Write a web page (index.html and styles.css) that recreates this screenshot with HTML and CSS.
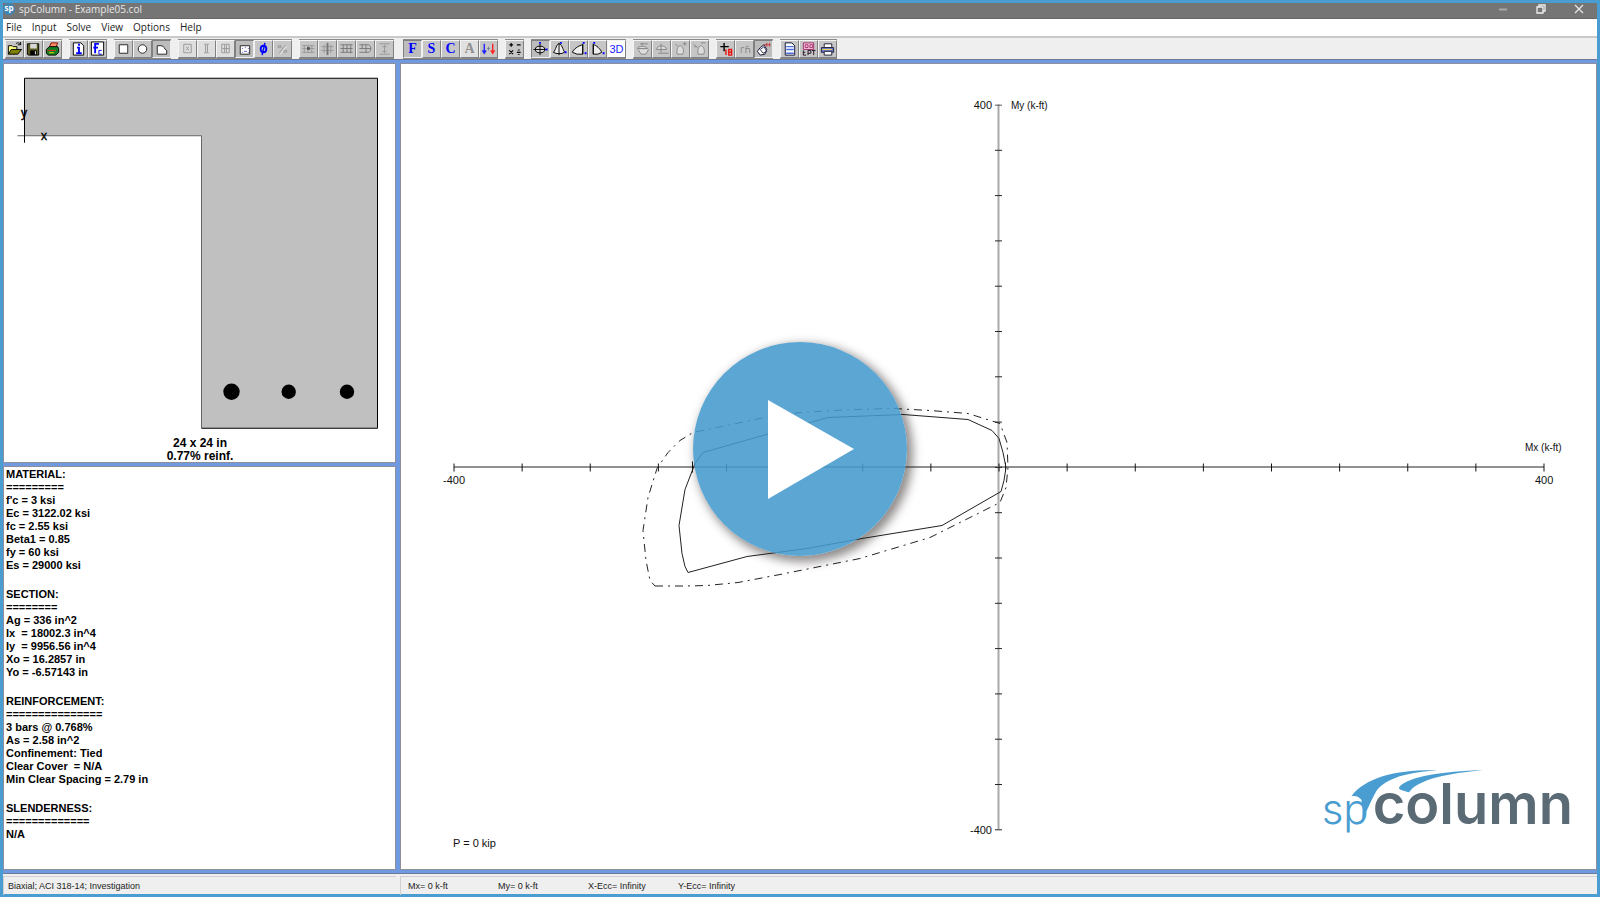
FILE: index.html
```html
<!DOCTYPE html>
<html lang="en">
<head>
<meta charset="utf-8">
<title>spColumn - Example05.col</title>
<link rel="stylesheet" href="styles.css">
</head>
<body>
<div class="window">
  <header class="titlebar">
    <svg class="app-icon" viewBox="0 0 12 12" aria-hidden="true"><circle cx="6" cy="6" r="6" fill="#3f86b5"/><text x="6" y="8" class="app-icon-text">sp</text></svg>
    <h1 class="title">spColumn - Example05.col</h1>
    <div class="window-controls">
      <button class="wc" aria-label="Minimize"><svg viewBox="0 0 10 10"><path d="M1 5.500h8" stroke="#a9a9a9" stroke-width="2"/></svg></button>
      <button class="wc" aria-label="Restore"><svg viewBox="0 0 10 10"><path d="M1 3h6v6H1zM3 3V1h6v6H7" fill="none" stroke="#f0f0f0" stroke-width="1.300"/></svg></button>
      <button class="wc" aria-label="Close"><svg viewBox="0 0 10 10"><path d="M1 1l8 8M9 1l-8 8" stroke="#e6e6e6" stroke-width="1.300"/></svg></button>
    </div>
  </header>
  <nav class="menubar" aria-label="Main menu">
    <button>File</button><button>Input</button><button>Solve</button><button>View</button><button>Options</button><button>Help</button>
  </nav>
  <div class="toolbar" role="toolbar" aria-label="Tools">
    <div class="group">
      <button aria-label="Open"><svg viewBox="0 0 17 17"><path d="M2 14V5h4l1 1h4v3" fill="#ffff80" stroke="#000"/><path d="M2 14l3-5h11l-4 5z" fill="#808000" stroke="#000"/><path d="M10 3c2-2 4-1 5 1M15 1v3h-3" fill="none" stroke="#000"/></svg></button>
      <button aria-label="Save"><svg viewBox="0 0 17 17"><path d="M2 3h12v12H3l-1-1z" fill="#5a5a20" stroke="#000"/><path d="M5 3h7v5H5z" fill="#d8d8d8"/><path d="M5 10h7v5H5z" fill="#000"/><path d="M10 11h1v3h-1z" fill="#fff"/></svg></button>
      <button aria-label="Print"><svg viewBox="0 0 17 17"><path d="M5 7l2-5h7l-2 5" fill="#ff8a6a" stroke="#801000"/><path d="M2 9l3-3h9l1 2v4l-3 3H4l-2-2z" fill="#128022" stroke="#000"/><path d="M3 10h9" stroke="#e22"/><path d="M5 12.500h5" stroke="#ffe000"/></svg></button>
    </div>
    <div class="group">
      <button aria-label="General information"><svg viewBox="0 0 17 17"><path d="M3 2h8l3 3v10H3z" fill="#fff" stroke="#000"/><path d="M7 7h2v6M6 13h6" fill="none" stroke="#00f" stroke-width="2"/><path d="M8 3h2v2H8z" fill="#00f"/></svg></button>
      <button aria-label="Material properties"><svg viewBox="0 0 17 17"><path d="M2 1h13v14H2z" fill="#fff" stroke="#000"/><path d="M10 3H6v10M4 7h5" fill="none" stroke="#00f" stroke-width="2"/><path d="M13 10h-3v4h3" fill="none" stroke="#00f"/></svg></button>
    </div>
    <div class="group">
      <button aria-label="Rectangular section"><svg viewBox="0 0 17 17"><path d="M4 4h9v9H4z" fill="#fff" stroke="#222"/></svg></button>
      <button aria-label="Circular section"><svg viewBox="0 0 17 17"><circle cx="8.500" cy="8.500" r="4.500" fill="#fff" stroke="#222"/></svg></button>
      <button class="pressed" aria-label="Irregular section"><svg viewBox="0 0 17 17"><path d="M4 5h4c4 0 3 4 6 5v4H4z" fill="#fff" stroke="#222"/></svg></button>
    </div>
    <div class="group">
      <button class="faint" disabled aria-label="All sides equal"><svg viewBox="0 0 17 17"><path d="M4.500 3.500h8v9h-8zM7 6l3 4M10 6l-3 4" fill="none" stroke="#999"/></svg></button>
      <button class="faint" disabled aria-label="Equal spacing"><svg viewBox="0 0 17 17"><path d="M6 3.500h5M6 12.500h5M7.500 4v8M9.500 4v8" fill="none" stroke="#999"/></svg></button>
      <button class="faint" disabled aria-label="Sides different"><svg viewBox="0 0 17 17"><path d="M4.500 3.500h8v9h-8zM7.500 4v8M9.500 4v8M5 8h8" fill="none" stroke="#999"/></svg></button>
      <button class="pressed" aria-label="Irregular pattern"><svg viewBox="0 0 17 17"><path d="M4 5h10v9H4z" fill="#fff" stroke="#222"/><path d="M6 8h1M9 7h1M12 8h1M6 12h1M8 11h3M12 12h1" stroke="#55c"/></svg></button>
      <button aria-label="Reduction factors"><svg viewBox="0 0 17 17"><ellipse cx="8.500" cy="8.500" rx="3" ry="3.500" fill="none" stroke="#00f" stroke-width="2"/><path d="M10 2L7 15" stroke="#00f" stroke-width="1.500"/></svg></button>
      <button disabled aria-label="Reinforcement ratio"><svg viewBox="0 0 17 17"><path d="M12 4l-7 9M4 5h3v2H4zM10 10h3v2h-3z" fill="none" stroke="#999"/><path d="M13 5l-7 9" stroke="#eee"/></svg></button>
    </div>
    <div class="group">
      <button disabled aria-label="Column above"><svg viewBox="0 0 17 17"><path d="M2 5h13M2 8h13M2 12h13M4 4v9M8 4v9M12 4v9" stroke="#999"/><path d="M7 8h3" stroke="#555" stroke-width="3"/></svg></button>
      <button disabled aria-label="Column"><svg viewBox="0 0 17 17"><path d="M2 6h13M2 10h13M5 4v9M12 4v9" stroke="#999"/><path d="M8.500 2v13" stroke="#777" stroke-width="2"/></svg></button>
      <button disabled aria-label="X beams"><svg viewBox="0 0 17 17"><path d="M2 4h13M2 8h13M2 12h13M5 4v8M9 4v8M13 4v9" stroke="#777"/></svg></button>
      <button disabled aria-label="Y beams"><svg viewBox="0 0 17 17"><path d="M2 4h10l2 2v4l-2 2H2M2 8h12M5 4v4M9 4v8" fill="none" stroke="#777"/></svg></button>
      <button disabled aria-label="Slenderness factors"><svg viewBox="0 0 17 17"><path d="M3 3h11M3 14h11M8.500 4v9M6 6h5M6 11h5" stroke="#999"/></svg></button>
    </div>
    <div class="group loads">
      <button class="letter pressed" aria-label="Factored loads">F</button>
      <button class="letter" aria-label="Service loads">S</button>
      <button class="letter" aria-label="Control points">C</button>
      <button class="letter" disabled aria-label="Axial loads">A</button>
      <button aria-label="Load combinations"><svg viewBox="0 0 17 17"><path d="M4 3v9M2 10l2 3 2-3" fill="none" stroke="#22f" stroke-width="1.500"/><path d="M7 8h3M8.500 6v4" stroke="#779"/><path d="M13 3v9M11 10l2 3 2-3" fill="none" stroke="#f22" stroke-width="1.500"/></svg></button>
    </div>
    <div class="group">
      <button aria-label="Execute"><svg viewBox="0 0 17 17"><path d="M3 4h4M5 2v4M11 4h4M3 10l4 4M7 10l-4 4M11 12h4" stroke="#000" stroke-width="1.300"/><path d="M12 9h2v1h-2zM12 14h2v1h-2z"/></svg></button>
    </div>
    <div class="group">
      <button class="pressed" aria-label="Mx My diagram"><svg viewBox="0 0 17 17"><ellipse cx="8" cy="9" rx="5" ry="3.500" fill="#ddd" stroke="#000"/><path d="M1 9h14M8 3v12" stroke="#000"/><path d="M7 1h2v2H7zM14 8h2v2h-2z" fill="#00f"/></svg></button>
      <button aria-label="P M diagram"><svg viewBox="0 0 17 17"><path d="M2 12C5 9 5 3 8 3s4 6 6 9c-3 2-9 2-12 0zM8 2v13" fill="#eee" stroke="#000"/><path d="M9 1h2v2H9zM14 11h2v2h-2z" fill="#00f"/></svg></button>
      <button aria-label="P M negative"><svg viewBox="0 0 17 17"><path d="M13 3v11M13 4C8 5 3 9 2 12l5 2h6z" fill="#eee" stroke="#000"/><path d="M13 1h2v2h-2zM15 12h2v2h-2z" fill="#00f"/></svg></button>
      <button aria-label="P M positive"><svg viewBox="0 0 17 17"><path d="M4 3v11M4 4c3 0 8 5 9 8l-4 2H4z" fill="#eee" stroke="#000"/><path d="M4 1h2v2H4zM14 12h2v2h-2z" fill="#00f"/></svg></button>
      <button class="three" aria-label="3D view">3D</button>
    </div>
    <div class="group">
      <button disabled aria-label="Previous contour"><svg viewBox="0 0 17 17"><path d="M3 8c1-3 9-3 11 0zM4 9l3 5h5l3-5M8 2v3M6 3h8" fill="#ddd" stroke="#858585"/></svg></button>
      <button disabled aria-label="Next contour"><svg viewBox="0 0 17 17"><path d="M3 9c1-5 10-5 11 0zM8 3v9M5 13h11" fill="#ddd" stroke="#858585"/></svg></button>
      <button disabled aria-label="Previous angle"><svg viewBox="0 0 17 17"><path d="M5 14c-1-5 1-9 3-9s5 4 3 9zM3 3l3 3M11 3h4M13 1v4" fill="#ddd" stroke="#858585"/></svg></button>
      <button disabled aria-label="Next angle"><svg viewBox="0 0 17 17"><path d="M7 14c-1-5 1-9 3-9s5 4 3 9zM2 3l4 4M10 2h5M3 6h3" fill="#ddd" stroke="#858585"/></svg></button>
    </div>
    <div class="group">
      <button aria-label="Point numbers"><svg viewBox="0 0 17 17"><path d="M3 6h9M7 2v9" stroke="#000" stroke-width="1.500"/><path d="M9 9v6M8 10h1M12 9h3v6h-3zM12 12h3" fill="none" stroke="#e11" stroke-width="1.500"/></svg></button>
      <button disabled aria-label="Spliced bars"><svg viewBox="0 0 17 17"><path d="M5 13V7h3M10 13V7c0-2 2-2 3-1M10 8h4v5" fill="none" stroke="#8a8a8a"/></svg></button>
      <button class="pressed" aria-label="Nominal diagram"><svg viewBox="0 0 17 17"><path d="M5 7l4-3 3 5-2 5-5 1-3-4z" fill="#fff" stroke="#113"/><path d="M5 9l4-3 3 5-4 2z" fill="none" stroke="#335"/><path d="M9 4h7M12 2v4M15 2v4" stroke="#c33"/></svg></button>
    </div>
    <div class="group">
      <button aria-label="Results"><svg viewBox="0 0 17 17"><path d="M4 2h7l3 3v10H4z" fill="#fff" stroke="#113"/><path d="M5 6h8M5 9h8M5 13h8" stroke="#4a6fe0" stroke-width="1.500"/></svg></button>
      <button aria-label="Export"><svg viewBox="0 0 17 17"><path d="M3 2h11v7H3z" fill="#f7c0dc" stroke="#a0306a"/><path d="M5 4h3v3H5zM10 4h3v3h-3z" fill="none" stroke="#a0306a"/><path d="M3 10v5h3M3 12h2M8 15v-5h3v3H8M14 10v5M12 10h4" fill="none" stroke="#201020"/></svg></button>
      <button aria-label="Print results"><svg viewBox="0 0 17 17"><path d="M5 3h8v4H5z" fill="#fff" stroke="#223"/><path d="M2 7h13v5H2z" fill="#6b7fd8" stroke="#223"/><path d="M3 9h10" stroke="#ffe040"/><path d="M5 11h8v4H5z" fill="#fff" stroke="#223"/></svg></button>
    </div>
  </div>
  <main class="workspace">
    <div class="side">
      <section class="panel section-view" aria-label="Section">
        <svg viewBox="4 65 391 397">
          <path d="M24.500 78.500H377.500V428.500H201.500V136H24.500z" fill="#c0c0c0"/>
          <path d="M201.500 428.500V136H17.500" class="edge-soft"/>
          <path d="M24.500 143V78.500H377.500V428.500H201.500" class="edge"/>
          <circle cx="231.500" cy="392" r="8.200"/><circle cx="288.700" cy="392" r="7.200"/><circle cx="347" cy="392" r="7.200"/>
          <text x="24" y="117" class="axis-name">y</text>
          <text x="44" y="140" class="axis-name">x</text>
          <text x="200" y="447" class="caption">24 x 24 in</text>
          <text x="200" y="460" class="caption">0.77% reinf.</text>
        </svg>
      </section>
      <section class="panel info" aria-label="Properties">
<pre>MATERIAL:
=========
f'c = 3 ksi
Ec = 3122.02 ksi
fc = 2.55 ksi
Beta1 = 0.85
fy = 60 ksi
Es = 29000 ksi</pre>
<pre>SECTION:
========
Ag = 336 in^2
Ix  = 18002.3 in^4
Iy  = 9956.56 in^4
Xo = 16.2857 in
Yo = -6.57143 in</pre>
<pre>REINFORCEMENT:
===============
3 bars @ 0.768%
As = 2.58 in^2
Confinement: Tied
Clear Cover  = N/A
Min Clear Spacing = 2.79 in</pre>
<pre>SLENDERNESS:
=============
N/A</pre>
      </section>
    </div>
    <section class="panel plot" aria-label="Interaction diagram">
      <svg viewBox="401 64 1195 804">
        <defs>
          <pattern id="xt" x="453.500" y="0" width="68.125" height="900" patternUnits="userSpaceOnUse"><path d="M.5 463v8" stroke="#111"/></pattern>
          <pattern id="yt" x="0" y="104" width="1600" height="45.300" patternUnits="userSpaceOnUse"><path d="M995 .5h7" stroke="#222"/></pattern>
        </defs>
        <path d="M454 466.500H1544" class="axis-x"/>
        <path d="M998.500 104V829" class="axis-y"/>
        <rect x="453" y="460" width="1092" height="14" fill="url(#xt)"/>
        <rect x="990" y="104" width="16" height="727" fill="url(#yt)"/>
        <path d="M692.500 461v11M1005.500 462v9" stroke="#111"/>
        <path class="curve" d="M688 572L747 556L807 548L862 538L942 525L1001 491L1004 480L1006 467L1003 452L999 438L992 430L968 419L903 414L828 417L770 433L703 452L695 463L685 489L679 525L682 553L685 566z"/>
        <path class="curve dashed" d="M655 585.500L687 585.500L707 585L738 582L780 574L860 558L930 537L970 517L1000 502L1006 487L1008 467L1007 442L1000 423L968 413L930 410L893 408L853 409L800 412L760 418L693 432L680 440L668 452L657 468L648 497L643 530L646 560L650 580z"/>
        <text x="992" y="108" class="num end">400</text>
        <text x="1011" y="108" class="lab">My (k-ft)</text>
        <text x="992" y="833" class="num end">-400</text>
        <text x="443" y="483" class="num">-400</text>
        <text x="1535" y="483" class="num">400</text>
        <text x="1525" y="450" class="lab">Mx (k-ft)</text>
        <text x="453" y="846" class="num">P = 0 kip</text>
      </svg>
      <div class="logo" aria-label="spColumn">
        <svg class="swoosh" viewBox="0 0 400 146" aria-hidden="true"><path fill="#4a9dd0" d="M88 78C130 20 230-2 345 1C260 5 190 23 162 63C145 93 132 128 120 146C122 120 121 100 117 88C108 78 100 76 88 78zM230 51C260 18 360 5 480 0C380 11 290 25 260 66C240 61 228 58 230 51z"/></svg>
        <span class="logo-sp">sp</span><span class="logo-column">column</span>
      </div>
    </section>
  </main>
  <footer class="statusbar">
    <div class="cell first">Biaxial; ACI 318-14; Investigation</div>
    <div class="cell values"><span>Mx= 0 k-ft</span><span>My= 0 k-ft</span><span>X-Ecc= Infinity</span><span>Y-Ecc= Infinity</span></div>
  </footer>
  <button class="play" aria-label="Play video"><svg viewBox="0 0 214 214"><path d="M75 58L161 107L75 157z" fill="#fff"/></svg></button>
</div>
</body>
</html>
```

FILE: styles.css
```css
* { box-sizing: border-box; }

body {
  margin: 0;
  font-family: "Liberation Sans", Arial, sans-serif;
  color: #000;
}

button {
  margin: 0;
  padding: 0;
  border: 0;
  background: none;
  font: inherit;
  color: inherit;
}

svg { display: block; }

.window {
  position: relative;
  display: flex;
  flex-direction: column;
  height: 100vh;
  min-height: 600px;
  border: 3px solid #4a9dd0;
  background: #efefef;
}

/* Title bar */
.titlebar {
  display: flex;
  align-items: center;
  height: 16px;
  padding: 0 13px 3px 0;
  background: #757575;
  border-bottom: 1px solid #666;
}
.app-icon { width: 12px; height: 12px; }
.app-icon-text { font: bold 8px "Open Sans", sans-serif; fill: #fff; text-anchor: middle; }
.title {
  flex: 1;
  margin: 0 0 0 4px;
  font: 10px "Open Sans", sans-serif;
  line-height: 12px;
  color: #e8e8e8;
}
.window-controls { display: flex; gap: 28px; }
.wc { width: 10px; height: 10px; }

/* Menu bar */
.menubar {
  display: flex;
  gap: 10px;
  height: 17px;
  padding-left: 3px;
  background: #fff;
  font: 10px "Open Sans", sans-serif;
  line-height: 17px;
}
.menubar button { color: #222; }

/* Toolbar */
.toolbar {
  display: flex;
  gap: 7px;
  height: 23px;
  padding: 2px 0 0 2px;
  border-top: 2px solid #c9c9c9;
  background: #efefef;
}
.group { display: flex; height: 18px; }
.loads { margin-left: 2px; }
.group button {
  width: 19px;
  height: 18px;
  border: 1px solid;
  border-color: #f4f4f4 #808080 #808080 #f4f4f4;
  background: #c6c6c6;
  box-shadow: 0 -1px #8a8a8a, 0 1px #8a8a8a;
}
.group button.pressed {
  border-color: #808080 #eee #eee #808080;
  background: #bcbcbc;
}
.group button.faint { background: #dedede; }
.group svg { width: 17px; height: 16px; }
.group .letter {
  font: bold 14px "Liberation Serif", serif;
  line-height: 16px;
  color: #00f;
}
.group .letter:disabled { color: #909090; background: #e0e0e0; }
.group .three {
  font: 11px "Liberation Sans", sans-serif;
  line-height: 16px;
  color: #22f;
  background: #fff;
}

/* Panels */
.workspace {
  flex: 1;
  display: grid;
  grid-template-columns: 393fr 1197fr;
  gap: 4px;
  min-height: 0;
  padding: 3px 0;
  background: #6f9ae0;
  border-top: 1px solid #70789a;
  border-bottom: 1px solid #70789a;
}
.side {
  display: grid;
  grid-template-rows: 400fr 403fr;
  gap: 3px;
  min-height: 0;
}
.panel {
  position: relative;
  min-width: 0;
  min-height: 0;
  border: 1px solid #8e8e9c;
  background: #fff;
  overflow: hidden;
}
.section-view svg,
.plot > svg { width: 100%; height: 100%; }
.edge { fill: none; stroke: #000; }
.edge-soft { fill: none; stroke: #666; }
.axis-name { font-size: 12px; text-anchor: middle; stroke: #000; stroke-width: 0.4; }
.caption { font-weight: bold; font-size: 12px; text-anchor: middle; }

.info {
  display: flex;
  flex-direction: column;
  gap: 16px;
  padding: 1px 0 0 2px;
}
.info pre {
  margin: 0;
  font: bold 11px "Liberation Sans", Arial, sans-serif;
  line-height: 13px;
}

/* Interaction diagram */
.axis-x { stroke: #222; }
.axis-y { stroke: #aaa; stroke-width: 2; }
.curve { fill: none; stroke: #222; }
.dashed { stroke-dasharray: 8 5 2 5; }
.num { font-size: 11px; fill: #111; }
.lab { font-size: 10px; fill: #111; }
.end { text-anchor: end; }

/* Product logo */
.logo {
  position: absolute;
  right: 23px;
  bottom: 24px;
  display: flex;
  align-items: baseline;
  line-height: 72px;
  font-family: Inter, sans-serif;
}
.logo-sp {
  font-size: 42px;
  font-weight: 300;
  color: #4a9dd0;
}
.logo-column {
  margin-left: 4px;
  font-size: 56px;
  font-weight: 600;
  color: #5a6b75;
}
.swoosh {
  position: absolute;
  left: 0;
  top: 2px;
  width: 134px;
  height: 49px;
  overflow: visible;
}

/* Status bar */
.statusbar {
  display: grid;
  grid-template-columns: 393fr 1197fr;
  gap: 4px;
  height: 20px;
  padding-top: 2px;
  background: #efefef;
  font-size: 9px;
  line-height: 18px;
  color: #222;
}
.cell {
  border-top: 1px solid #d0d0d0;
  border-left: 1px solid #d0d0d0;
  white-space: nowrap;
}
.first { padding-left: 4px; }
.values {
  display: grid;
  grid-template-columns: repeat(4, 90px);
  padding-left: 7px;
}

/* Video overlay */
.play {
  position: absolute;
  top: 50%;
  left: 50%;
  width: 214px;
  height: 214px;
  border-radius: 50%;
  background: rgba(70, 154, 206, 0.88);
  box-shadow: 4px 4px 10px 2px rgba(40, 30, 30, 0.5);
  transform: translate(-50%, -50%);
}
```
